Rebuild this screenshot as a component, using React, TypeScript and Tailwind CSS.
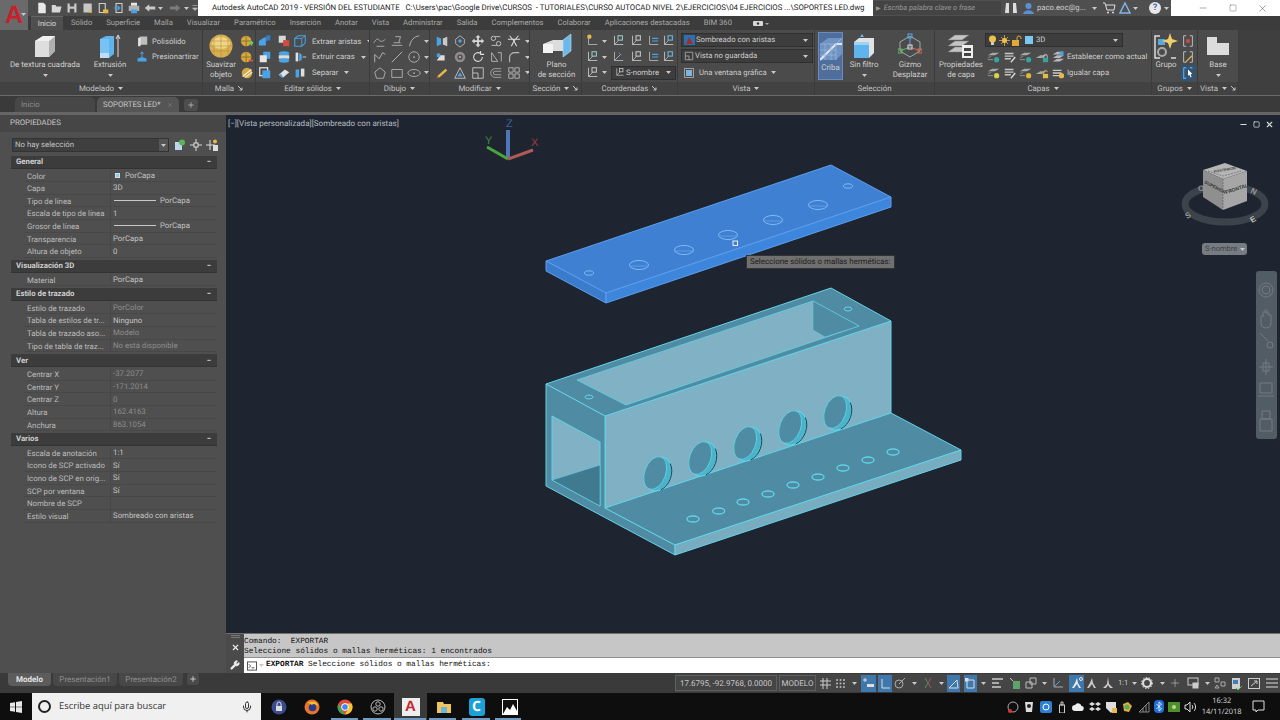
import React from "react";
import { Mic, Plus, Minus, X, Square, Wrench } from "lucide-react";

const G = "#b4b4b4";
const B = "#4aa3e6";
const Y = "#e6b94a";

const layer = (c: string) => (
  <>
    <path d="M1 6l5-3h8L9 6z" fill="#a8a8a8" />
    <path d="M1 9l4-2" stroke="#8a8a8a" />
    <circle cx="11" cy="11" r="3" fill={c} />
    <path d="M1 11h6" stroke="#9a9a9a" />
  </>
);
const ucs = (c: string) => (
  <>
    <path d="M4 2v10h10" stroke={G} strokeWidth="1.2" />
    <path d="M4 12l5-5" stroke={G} />
    <rect x="8" y="2" width="5" height="5" fill="none" stroke={c} strokeWidth="1.2" />
  </>
);
const P: Record<string, React.ReactNode> = {
  new: <path d="M3 1h7l3 3v11H3z" fill="#e8e8e8" />,
  open: <path d="M1 4h5l1 2h7l-2 8H1z" fill="#d7d7d7" />,
  save: <path d="M2 2h12v12H2z M5 2v4h6V2z M5 9v5h6V9z" fill="#c8c8c8" fillRule="evenodd" />,
  saveas: <><path d="M2 2h11v12H2z" fill="#c8c8c8" /><path d="M9 9l5 5H9z" fill={Y} /></>,
  cloud: <><path d="M3 2h8v12H3z" fill="none" stroke="#cfcfcf" strokeWidth="1.5" /><path d="M8 10h7v5H8z" fill={Y} /></>,
  export: <><path d="M4 2h8v12H4z" fill="none" stroke="#cfcfcf" strokeWidth="1.4" /><path d="M1 8h8M6 5l3 3-3 3" stroke={B} strokeWidth="1.6" /></>,
  print: <><path d="M4 1h8v4H4z" fill="#e8e8e8" /><path d="M1 5h14v7H1z" fill="#b0b0b0" /><path d="M4 10h8v5H4z" fill={B} /></>,
  undo: <path d="M7 3L1 8l6 5v-3h8V6H7z" fill="#c8c8c8" />,
  redo: <path d="M9 3l6 5-6 5v-3H1V6h8z" fill="#7b7b7b" />,
  menu: <path d="M4 4h8M4 8l4 4 4-4z" stroke="#bbb" fill="#bbb" />,
  cubes: <><path d="M1 8l6-4h7l-5 4v5H1z" fill={B} /><path d="M9 8V2l5-1v6z" fill="#2e7fc6" /></>,
  sq2: <><rect x="2" y="2" width="8" height="8" fill="#d8d8d8" /><rect x="7" y="7" width="7" height="7" fill="#d24b3e" /></>,
  box3: <><path d="M2 5l4-3h8v8l-4 4H2z" fill="none" stroke={B} strokeWidth="1.2" /><path d="M2 5h8v9M10 5l4-3" stroke={B} /></>,
  cw: <><rect x="6" y="2" width="8" height="8" fill={B} /><rect x="2" y="6" width="8" height="8" fill="#e6e6e6" /></>,
  cyl: <><ellipse cx="8" cy="4" rx="6" ry="2.5" fill={B} /><path d="M2 6h12v4H2z" fill="#dcdcdc" /><ellipse cx="8" cy="12" rx="6" ry="2.5" fill={B} /></>,
  ex: <><path d="M3 3h3v10H3z" fill="#e0e0e0" /><path d="M7 3l3 2v6l-3 2z" fill={B} /><path d="M11 8h4" stroke="#ddd" /></>,
  cw2: <><rect x="2" y="2" width="9" height="9" fill="none" stroke="#ddd" strokeWidth="1.5" /><rect x="5" y="5" width="9" height="9" fill={B} /></>,
  era: <><path d="M2 10l7-6 5 3-7 6z" fill="#e2e2e2" /><path d="M2 10l3 3h2l-2-4z" fill={B} /></>,
  sep: <><path d="M3 4h4v9H3z" fill={B} /><path d="M9 3h4v9H9z" fill="#dedede" /></>,
  pols: <><path d="M3 4l3-2h9v11H6l-3 2z" fill="#bdbdbd" /><path d="M3 4h3v11H3z" fill="#e5e5e5" /></>,
  press: <><path d="M2 10l6-2 6 2v4H2z" fill={B} /><path d="M8 8V2M6 4l2-3 2 3" stroke={B} strokeWidth="1.3" fill="none" /></>,
  gp: <><circle cx="7" cy="8" r="6" fill="#d6a83e" /><path d="M1 8h12M7 2v12" stroke="#8a6f25" /><path d="M11 10h4M13 8v5" stroke="#5fd45f" strokeWidth="2" /></>,
  gm: <><circle cx="7" cy="8" r="6" fill="#d6a83e" /><path d="M1 8h12M7 2v12" stroke="#8a6f25" /><path d="M10 12h5" stroke="#e0533c" strokeWidth="2" /></>,
  gs: <><circle cx="8" cy="8" r="6" fill="#d6a83e" /><path d="M3 12L13 4M6 13L14 7" stroke="#eee" strokeWidth="1.4" /></>,
  poly: <path d="M1 10c3-5 5-5 6-3s4 2 7-1M4 14h9" stroke={G} />,
  line: <path d="M2 14L14 2" stroke={G} strokeWidth="1.1" />,
  arc: <path d="M3 14C4 7 8 3 14 2" stroke={G} strokeWidth="1.1" />,
  wave: <path d="M2 14V5l5 5 4-7 3 2" stroke={G} strokeWidth="1.1" />,
  circ: <><circle cx="8" cy="8" r="6" stroke={G} /><circle cx="8" cy="8" r="1" fill={G} /></>,
  pent: <path d="M8 2l6 5-2 7H4L2 7z" stroke={G} />,
  rect: <path d="M2 4h12v9H2z" stroke={G} />,
  ell: <><ellipse cx="8" cy="8" rx="7" ry="4" stroke={G} /><circle cx="8" cy="8" r="1" fill={G} /></>,
  hat: <path d="M2 13h12M4 10h8M6 3h6l-2 7" stroke={G} />,
  mirror: <><path d="M2 3l5 2v7l-5 2z" fill={B} /><path d="M9 5l5-2v11l-5-2z" fill="#c9c9c9" /></>,
  arr3: <><path d="M8 2l5 4v5l-5 4-5-4V6z" stroke="#bbb" /><circle cx="8" cy="8" r="2" fill={B} /></>,
  move: <path d="M8 1l3 3H9v3h3V5l3 3-3 3V9H9v3h2l-3 3-3-3h2V9H4v2L1 8l3-3v2h3V4H5z" fill="#d8d8d8" />,
  scis: <><circle cx="5" cy="5" r="2.5" stroke="#ccc" /><circle cx="11" cy="11" r="2.5" stroke="#ccc" /><path d="M7 3h6M3 13h6" stroke="#ccc" /></>,
  trim: <path d="M3 2l5 6 5-6M5 14l3-6 3 6M1 6h14" stroke="#ddd" strokeWidth="1.2" />,
  stretch: <><path d="M2 12h9V6H6z" fill="#ddd" /><path d="M2 4h4v4H2z" fill={B} /></>,
  gear: <><circle cx="8" cy="8" r="6" fill="#8c8c8c" /><circle cx="8" cy="8" r="3" fill="#4a4a4a" /><circle cx="8" cy="8" r="1.4" fill="#c79090" /></>,
  rot: <path d="M13 8a5 5 0 1 1-2-4M11 1v4h4" stroke="#ddd" strokeWidth="1.2" />,
  scale: <path d="M3 13V3l7 10zM10 3h4v10" stroke="#bbb" />,
  fillet: <path d="M3 14V8c0-3 3-5 6-5h5" stroke="#bbb" strokeWidth="1.2" />,
  pencil: <><path d="M2 14l3-1 9-8-2-2-9 8z" fill={Y} /><path d="M2 14l3-1-2-2z" fill="#d24b3e" /></>,
  tri: <><path d="M8 2l6 12H2z" stroke="#ccc" /><path d="M8 7l3 5H5z" fill={B} /></>,
  frame: <><path d="M2 2h12v12H2z" stroke="#ccc" /><path d="M2 8h6v6" stroke="#ccc" /></>,
  offs: <path d="M14 3H7a5 5 0 0 0 0 10h7M14 6H7a2 2 0 0 0 0 4h7" stroke="#aaa" />,
  arr: <path d="M2 2h5v5H2zM9 2h5v5H9zM2 9h5v5H2zM9 9h5v5H9z" stroke="#bbb" />,
  u1: <><path d="M4 2v10h10" stroke={G} /><circle cx="5" cy="3" r="2.5" fill={Y} /></>,
  u2: ucs("#9cc"),
  u3: ucs("#6bb6e5"),
  u4: ucs("#c8c8c8"),
  u5: <><path d="M4 2v10h10" stroke={G} /><path d="M7 5h7M7 8h7" stroke={B} strokeWidth="1.2" /></>,
  ray: <><path d="M4 2v10h10M4 12l7-7" stroke={G} /><path d="M9 3l3 3" stroke={B} /></>,
  view: <><path d="M2 2h12v12H2z" stroke="#bbb" /><rect x="4" y="4" width="8" height="8" fill="#7db5e2" /></>,
  lay: layer("#35a6a0"),
  lay2: layer("#d9d24f"),
  lay3: layer("#e0b53e"),
  lay4: layer("#9a9a9a"),
  lock: <><path d="M1 9l5-3h7L8 9z" fill="#a8a8a8" /><rect x="9" y="9" width="6" height="5" fill="#3aa3a0" /><path d="M10 9V7a2 2 0 0 1 4 0v2" stroke="#ccc" /></>,
  lockY: <><path d="M1 9l5-3h7L8 9z" fill="#a8a8a8" /><rect x="9" y="9" width="6" height="5" fill={Y} /><path d="M10 9V7a2 2 0 0 1 4 0" stroke={Y} /></>,
  edit: <><path d="M2 4h10M2 7h10M2 10h7" stroke="#c8c8c8" strokeWidth="1.5" /><path d="M9 14l5-6" stroke="#ddd" strokeWidth="1.5" /></>,
  set: <><path d="M2 5l5-3h8l-5 3zM2 9l5-3h8l-5 3zM2 13l5-3h8l-5 3z" fill="#b9b9b9" /><circle cx="12" cy="4" r="2.5" fill={B} /></>,
  match: <><path d="M2 5h10M2 8h10M2 11h8" stroke="#c8c8c8" strokeWidth="1.6" /><circle cx="12" cy="11" r="3" fill={Y} /></>,
  grpA: <><path d="M3 2h3M3 2v12h3M13 2h-3M13 2v12h-3" stroke="#ccc" /><path d="M6 6h4v4H6z" fill="#d24b3e" /></>,
  grpB: <><path d="M3 2h3M3 2v12h3M13 2h-3M13 2v12h-3" stroke="#ccc" /><path d="M5 13l7-7 1 1-7 7z" fill={Y} /></>,
  grpC: <><path d="M3 2h3M3 2v12h3M13 2h-3" stroke={B} strokeWidth="1.5" /><path d="M8 4l5 5-2 .5 1 3-1 .5-1.5-3L8 11z" fill="#fff" /></>,
};
const Ico = ({ k, s = 14, className = "" }: { k: string; s?: number; className?: string }) => (
  <svg width={s} height={s} viewBox="0 0 16 16" fill="none" className={"shrink-0 " + className}>{P[k]}</svg>
);
const Dn = ({ className = "" }: { className?: string }) => (
  <svg width="5" height="3" viewBox="0 0 5 3" className={"shrink-0 " + className}><path d="M0 0h5L2.5 3z" fill="#c8c8c8" /></svg>
);
const Launch = () => (
  <svg width="5" height="5" viewBox="0 0 5 5" className="shrink-0"><path d="M0 0l4 4M4 1.5V4H1.5" stroke="#c8c8c8" fill="none" /></svg>
);

const Panel = ({ className, label, arrow = true, launch = false, children }: { className: string; label: string; arrow?: boolean; launch?: boolean; children: React.ReactNode }) => (
  <div className={"flex flex-col shrink-0 border-r border-[#3b3b3b] " + className}>
    <div className="h-[52px] flex bg-[#4b4b4b] overflow-hidden">{children}</div>
    <div className="h-[13px] bg-[#424242] flex items-center justify-center gap-[4px] text-[7.9px] text-[#c4c4c4]">
      <span>{label}</span>
      {arrow && <Dn />}
      {launch && <Launch />}
    </div>
  </div>
);
const Big = ({ className, icon, l1, l2, dn = false }: { className: string; icon: React.ReactNode; l1: string; l2?: string; dn?: boolean }) => (
  <div className={"flex flex-col items-center shrink-0 text-[7.85px] leading-[10.5px] text-[#cfcfcf] " + className}>
    <div className="h-[27px] mt-[2.5px] flex items-center justify-center">{icon}</div>
    <span className="whitespace-nowrap">{l1}</span>
    {l2 && <span className="whitespace-nowrap">{l2}</span>}
    {dn && <Dn className="mt-[4px]" />}
  </div>
);
const SRow = ({ className = "", children }: { className?: string; children: React.ReactNode }) => (
  <div className={"h-[15.7px] flex items-center text-[7.7px] text-[#cfcfcf] whitespace-nowrap " + className}>{children}</div>
);
const Col = ({ className = "", children }: { className?: string; children: React.ReactNode }) => (
  <div className={"flex flex-col pt-[3.5px] " + className}>{children}</div>
);

const Tabs = ["Sólido", "Superficie", "Malla", "Visualizar", "Paramétrico", "Inserción", "Anotar", "Vista", "Administrar", "Salida", "Complementos", "Colaborar", "Aplicaciones destacadas", "BIM 360"];

const Quick = () => (
  <div className="w-[170px] h-[16px] bg-[#4d4d4d] flex items-center pl-[6px]">
    {["new", "open", "save", "saveas", "cloud", "export", "print"].map((k) => (
      <Ico key={k} k={k} s={12} className="mx-[1.7px]" />
    ))}
    <Ico k="undo" s={12} className="ml-[2px]" /><Dn className="mx-[2px]" />
    <Ico k="redo" s={12} className="ml-[4px]" /><Dn className="ml-[3px] mr-[1px]" />
    <Ico k="menu" s={10} />
  </div>
);

const TitleBar = () => (
  <div className="h-[16px] flex items-stretch bg-white">
    <Quick />
    <div className="w-[675px] pl-[14px] text-[7.84px] leading-[16px] text-[#222] whitespace-pre overflow-hidden">
      {"Autodesk AutoCAD 2019 - VERSIÓN DEL ESTUDIANTE   C:\\Users\\pac\\Google Drive\\CURSOS  - TUTORIALES\\CURSO AUTOCAD NIVEL 2\\EJERCICIOS\\04 EJERCICIOS ...\\SOPORTES LED.dwg"}
    </div>
    <div className="w-[298px] bg-[#4f4f4f] flex items-center text-[7.7px] text-[#d0d0d0]">
      <div className="w-[128px] h-[14px] bg-[#444] flex items-center pl-[3px] gap-[3px] italic text-[7.4px] text-[#9a9a9a]">
        <span className="text-[6px] not-italic">▶</span><span>Escriba palabra clave o frase</span>
      </div>
      <svg width="14" height="12" viewBox="0 0 14 12" className="ml-[3px]"><path d="M2 1h3v10H1zM9 1h3l1 10H9z" fill="#ddd" /></svg>
      <svg width="13" height="13" viewBox="0 0 13 13" className="ml-[4px]"><circle cx="6.5" cy="4" r="3" fill="#5b8fd6" /><path d="M1 12c1-5 10-5 11 0z" fill="#5b8fd6" /></svg>
      <span className="ml-[2px] w-[50px]">paco.eoc@g...</span>
      <Dn className="ml-[5px]" />
      <svg width="14" height="12" viewBox="0 0 14 12" className="ml-[5px]"><path d="M1 1h2l2 7h7l1-5H4" stroke="#ddd" fill="none" /><circle cx="6" cy="10.5" r="1" fill="#ddd" /><circle cx="11" cy="10.5" r="1" fill="#ddd" /></svg>
      <svg width="12" height="12" viewBox="0 0 12 12" className="ml-[3px]"><path d="M6 1l5 10H1z" stroke="#7fb2e5" fill="none" strokeWidth="1.5" /></svg>
      <Dn className="ml-[2px]" />
      <div className="ml-[11px] w-[12px] h-[12px] rounded-full bg-[#e8e8e8] text-[#3a6db5] text-[9px] font-bold leading-[12px] text-center">?</div>
      <Dn className="ml-[3px]" />
    </div>
    <div className="flex-1 flex items-center text-[#333]">
      <Minus size={10} strokeWidth={1} className="ml-[27px]" />
      <Square size={8} strokeWidth={1} className="ml-[21px]" />
      <X size={11} strokeWidth={1} className="ml-[20px]" />
    </div>
  </div>
);

const RibbonTabs = () => (
  <div className="h-[14px] bg-[#3c3c3c] flex items-center text-[7.65px] text-[#a8a8a8] pl-[31px]">
    <div className="w-[32px] h-[14px] bg-[#4f4f4f] border-t border-[#666] text-[#dcdcdc] text-center leading-[13px]">Inicio</div>
    <div className="flex gap-[14px] ml-[8px]">
      {Tabs.map((t) => <span key={t} className="whitespace-nowrap">{t}</span>)}
    </div>
    <svg width="16" height="7" viewBox="0 0 16 7" className="ml-[21px]"><rect x="0" y="1" width="10" height="5" rx="1" fill="#d8d8d8" /><circle cx="5" cy="3.5" r="1.2" fill="#333" /><path d="M12 3h4l-2 2z" fill="#aaa" /></svg>
  </div>
);

const CubeBig = () => (
  <svg width="24" height="24" viewBox="0 0 24 24"><path d="M2 7l8-5h12v15l-6 6H2z" fill="#dedede" /><path d="M16 7l6-5v15l-6 6z" fill="#b0b0b0" /><path d="M2 7l8-5h12l-6 5z" fill="#f0f0f0" /></svg>
);
const Extr = () => (
  <svg width="22" height="26" viewBox="0 0 22 26"><path d="M1 6l6-3h8v18l-5 4H1z" fill="#5fb4ee" /><path d="M1 6h9v19H1z" fill="#78c3f3" /><path d="M1 20h9v5H1z" fill="#bcdff5" /><path d="M19 24V3M17 6l2-4 2 4" stroke="#ddd" fill="none" /></svg>
);
const Sphere = () => (
  <svg width="24" height="24" viewBox="0 0 24 24"><circle cx="12" cy="12" r="11.5" fill="#d8b04f" /><ellipse cx="12" cy="9" rx="9" ry="6" fill="#efd585" /><path d="M1 12h22M12 1v22M5 3v18M19 3v18M2 7h20M2 17h20" stroke="#a88a38" strokeWidth=".5" /></svg>
);
const Plano = () => (
  <svg width="32" height="26" viewBox="0 0 32 26"><path d="M2 11l10-4h10v11H2z" fill="#dcdcdc" /><path d="M2 11h10v9H2z" fill="#f2f2f2" /><path d="M22 7l8-6v17l-8 6z" fill="#6db8ea" stroke="#bfe2f8" strokeWidth=".6" /></svg>
);
const CribaI = () => (
  <svg width="22" height="24" viewBox="0 0 22 24"><path d="M0 7l8-6h14v16l-6 6H0z" fill="#6f94c4" /><path d="M0 23L16 7h6" stroke="#dfe7f2" strokeWidth="2" fill="none" /><path d="M16 7v16M0 7h16M22 1l-6 6M5 7v16M11 7v16M0 13h16M0 18h16" stroke="#9db7d9" strokeWidth=".7" /></svg>
);
const SinF = () => (
  <svg width="24" height="26" viewBox="0 0 24 26"><path d="M10 1l2 3H8z" fill="#6db8ea" /><path d="M2 9l5-4h15v15l-5 5H2z" fill="#e2e2e2" /><path d="M2 9h15v16H2z" fill="#5fb4ee" /><path d="M2 9h15v3H2z" fill="#9ed3f5" /></svg>
);
const Gizmo = () => (
  <svg width="24" height="26" viewBox="0 0 24 26" fill="none"><path d="M12 3l10 6v9l-10 6-10-6V9z" stroke="#9aa" /><path d="M12 3v11" stroke="#5fa8e6" /><path d="M12 14L2 18" stroke="#68b868" /><path d="M12 14l10 4" stroke="#d36a5c" /><rect x="10" y="1" width="4" height="4" stroke="#5fa8e6" /><rect x="0" y="16" width="4" height="4" stroke="#68b868" /><rect x="20" y="16" width="4" height="4" stroke="#d36a5c" /><rect x="10" y="12" width="4" height="4" stroke="#ddd" /></svg>
);
const Props = () => (
  <svg width="28" height="26" viewBox="0 0 28 26"><path d="M1 7l7-5h14l-7 5zM1 13l7-5h14l-7 5zM1 19l7-5h14l-7 5z" fill="#c4c4c4" stroke="#777" strokeWidth=".5" /><rect x="15" y="12" width="11" height="13" fill="#eee" /><path d="M17 15h7v3h-7zM17 20h7v3h-7z" fill="#444" /></svg>
);
const GrupoI = () => (
  <svg width="24" height="28" viewBox="0 0 24 28" fill="none"><path d="M6 4H1v22h5M22 26h-5" stroke="#ddd" strokeWidth="1.5" /><rect x="4" y="7" width="7" height="6" fill="#5aa7dd" /><circle cx="8" cy="20" r="4" stroke="#aaa" strokeWidth="2" /><path d="M16 1l2 6 6 2-6 2-2 6-2-6-6-2 6-2z" fill="#f1cf68" /></svg>
);
const Base = () => (
  <svg width="22" height="18" viewBox="0 0 22 18"><path d="M0 0h10v6h12v12H0z" fill="#dcdcdc" /></svg>
);

const Combo = ({ className, children }: { className: string; children: React.ReactNode }) => (
  <div className={"h-[14px] bg-[#3d3d3d] border border-[#2f2f2f] flex items-center text-[7.7px] text-[#cfcfcf] pl-[2px] pr-[4px] whitespace-nowrap " + className}>
    {children}
    <Dn className="ml-auto" />
  </div>
);

const Ribbon = () => (
  <div className="h-[65px] flex bg-[#3f3f3f] border-b border-[#6a6a6a] box-content">
    <Panel className="w-[203px]" label="Modelado">
      <Big className="w-[78px] ml-[6px]" icon={<CubeBig />} l1="De textura cuadrada" dn />
      <Big className="w-[40px] ml-[6px]" icon={<Extr />} l1="Extrusión" dn />
      <Col className="ml-[6px]">
        <SRow className="gap-[4px]"><Ico k="pols" s={12} />Polisólido</SRow>
        <SRow className="gap-[4px]"><Ico k="press" s={12} />Presionartirar</SRow>
      </Col>
    </Panel>
    <Panel className="w-[53px]" label="Malla" arrow={false} launch>
      <Big className="w-[32px] ml-[2px]" icon={<Sphere />} l1="Suavizar" l2="objeto" />
      <Col className="ml-[3px]"><SRow><Ico k="gp" /></SRow><SRow><Ico k="gm" /></SRow><SRow><Ico k="gs" /></SRow></Col>
    </Panel>
    <Panel className="w-[114px]" label="Editar sólidos">
      <Col className="ml-[2px]">
        <SRow className="gap-[5px]"><Ico k="cubes" /><Ico k="sq2" /><Ico k="box3" className="ml-[-3px]" /><span>Extraer aristas</span><Dn className="ml-[1px]" /></SRow>
        <SRow className="gap-[5px]"><Ico k="cw" /><Ico k="cyl" /><Ico k="ex" className="ml-[-3px]" /><span>Extruir caras</span><Dn className="ml-[1px]" /></SRow>
        <SRow className="gap-[5px]"><Ico k="cw2" /><Ico k="era" /><Ico k="sep" className="ml-[-3px]" /><span>Separar</span><Dn className="ml-[1px]" /></SRow>
      </Col>
    </Panel>
    <Panel className="w-[60px]" label="Dibujo">
      <Col className="ml-[3px]">
        <SRow className="gap-[3px]"><Ico k="poly" /><Ico k="hat" /><Ico k="arc" /><Dn /></SRow>
        <SRow className="gap-[3px]"><Ico k="wave" /><Ico k="line" /><Ico k="circ" /><Dn /></SRow>
        <SRow className="gap-[3px]"><Ico k="pent" /><Ico k="rect" /><Ico k="ell" /><Dn /></SRow>
      </Col>
    </Panel>
    <Panel className="w-[100px]" label="Modificar">
      <Col className="ml-[5px]">
        <SRow className="gap-[4px]"><Ico k="mirror" /><Ico k="arr3" /><Ico k="move" /><Ico k="scis" /><Ico k="trim" /><Dn /></SRow>
        <SRow className="gap-[4px]"><Ico k="stretch" /><Ico k="gear" /><Ico k="rot" /><Ico k="scale" /><Ico k="fillet" /><Dn /></SRow>
        <SRow className="gap-[4px]"><Ico k="pencil" /><Ico k="tri" /><Ico k="frame" /><Ico k="offs" /><Ico k="arr" /><Dn /></SRow>
      </Col>
    </Panel>
    <Panel className="w-[52px]" label="Sección" launch>
      <Big className="w-[51px] ml-[1px]" icon={<Plano />} l1="Plano" l2="de sección" />
    </Panel>
    <Panel className="w-[96px]" label="Coordenadas" arrow={false} launch>
      <Col className="ml-[3px]">
        <SRow><Ico k="u1" /><Dn className="ml-[3px] mr-[4px]" /><Ico k="u2" className="mr-[4px]" /><Ico k="u4" className="mr-[3px]" /><Ico k="u5" className="mr-[1px]" /><Ico k="u3" /></SRow>
        <SRow><Ico k="u2" /><Dn className="ml-[3px] mr-[4px]" /><Ico k="ray" className="mr-[4px]" /><Ico k="u4" className="mr-[3px]" /><Ico k="u5" className="mr-[1px]" /><Ico k="u3" /></SRow>
        <SRow><Ico k="u4" /><Dn className="ml-[3px] mr-[4px]" /><Combo className="w-[65px]"><Ico k="u4" s={11} /><span className="ml-[1px]">S-nombre</span></Combo></SRow>
      </Col>
    </Panel>
    <Panel className="w-[137px]" label="Vista">
      <div className="flex flex-col ml-[3px] w-[132px] pt-[3px]">
        <Combo className="w-[132px] mb-[2px]">
          <svg width="11" height="10" viewBox="0 0 11 10" className="mr-[1px]"><rect width="11" height="10" fill="#2e6fb0" /><path d="M2 9l3-7 4 7z" fill="#a02d2d" /></svg>Sombreado con aristas
        </Combo>
        <Combo className="w-[132px] mb-[2px]"><Ico k="frame" s={10} className="mr-[1px]" />Vista no guardada</Combo>
        <SRow className="ml-[2px] gap-[4px]"><Ico k="view" s={12} />Una ventana gráfica<Dn /></SRow>
      </div>
    </Panel>
    <Panel className="w-[120px]" label="Selección" arrow={false}>
      <div className="w-[25px] h-[48px] mt-[2px] ml-[3px] bg-[#4f6e9c] border border-[#6a8bbb] shrink-0">
        <Big className="w-full" icon={<CribaI />} l1="Criba" />
      </div>
      <Big className="w-[42px]" icon={<SinF />} l1="Sin filtro" dn />
      <Big className="w-[46px] ml-[2px]" icon={<Gizmo />} l1="Gizmo" l2="Desplazar" />
    </Panel>
    <Panel className="w-[217px]" label="Capas">
      <Big className="w-[46px] ml-[3px]" icon={<Props />} l1="Propiedades" l2="de capa" />
      <div className="flex flex-col ml-[1px] pt-[3px]">
        <Combo className="w-[138px] mb-[2px]">
          <svg width="9" height="11" viewBox="0 0 9 11"><circle cx="4.5" cy="4" r="3.5" fill="#efc04a" /><rect x="3" y="7" width="3" height="3" fill="#ccc" /></svg>
          <svg width="11" height="11" viewBox="0 0 11 11" className="ml-[2px]"><circle cx="5.5" cy="5.5" r="2.5" fill="#efc04a" /><path d="M5.5 0v11M0 5.5h11M2 2l7 7M9 2l-7 7" stroke="#efc04a" strokeWidth=".7" /></svg>
          <svg width="10" height="11" viewBox="0 0 10 11" className="ml-[2px]"><rect y="5" width="7" height="6" fill="#e2a93a" /><path d="M5 5V3a2 2 0 0 1 4 0v1" stroke="#e2a93a" fill="none" /></svg>
          <div className="w-[8px] h-[8px] bg-[#79c8f0] ml-[3px] mr-[3px]" />3D
        </Combo>
        <SRow className="gap-[2px] ml-[2px]"><Ico k="lay" /><Ico k="edit" /><Ico k="lay" /><Ico k="lock" /><Ico k="set" /><span>Establecer como actual</span></SRow>
        <SRow className="gap-[2px] ml-[2px]"><Ico k="lay2" /><Ico k="edit" /><Ico k="lay3" /><Ico k="lockY" /><Ico k="match" /><span>Igualar capa</span></SRow>
      </div>
    </Panel>
    <Panel className="w-[46px]" label="Grupos">
      <Big className="w-[28px]" icon={<GrupoI />} l1="Grupo" />
      <Col className="ml-[1px]"><SRow><Ico k="grpA" /></SRow><SRow><Ico k="grpB" /></SRow><SRow className="bg-[#35536f] w-[15px]"><Ico k="grpC" /></SRow></Col>
    </Panel>
    <Panel className="w-[41px]" label="Vista" launch>
      <Big className="w-[40px]" icon={<Base />} l1="Base" dn />
    </Panel>
  </div>
);

const FileTabs = () => (
  <div className="h-[16px] bg-[#3a3a3a] flex items-end text-[7.8px] pl-[15px]">
    <div className="w-[80px] h-[15px] bg-[#474747] rounded-t-[5px] text-[#8e8e8e] pl-[6px] leading-[16px]">Inicio</div>
    <div className="w-[82px] h-[15px] ml-[2px] bg-[#555] rounded-t-[5px] text-[#c8c8c8] pl-[6px] leading-[16px] flex items-center whitespace-nowrap">
      SOPORTES LED*<X size={6} className="ml-[6px] text-[#888]" />
    </div>
    <div className="w-[14px] h-[12px] ml-[5px] mb-[1px] bg-[#4d4d4d] rounded-[3px] flex items-center justify-center"><Plus size={8} className="text-[#ccc]" /></div>
  </div>
);

type R = { k: string; v?: string; dim?: boolean; ln?: boolean; sw?: boolean };
const Groups: { t: string; rows: R[] }[] = [
  { t: "General", rows: [
    { k: "Color", v: "PorCapa", sw: true }, { k: "Capa", v: "3D" }, { k: "Tipo de línea", v: "PorCapa", ln: true },
    { k: "Escala de tipo de línea", v: "1" }, { k: "Grosor de línea", v: "PorCapa", ln: true }, { k: "Transparencia", v: "PorCapa" }, { k: "Altura de objeto", v: "0" },
  ] },
  { t: "Visualización 3D", rows: [{ k: "Material", v: "PorCapa" }] },
  { t: "Estilo de trazado", rows: [
    { k: "Estilo de trazado", v: "PorColor", dim: true }, { k: "Tabla de estilos de tr...", v: "Ninguno" },
    { k: "Tabla de trazado aso...", v: "Modelo", dim: true }, { k: "Tipo de tabla de traz...", v: "No está disponible", dim: true },
  ] },
  { t: "Ver", rows: [
    { k: "Centrar X", v: "-37.2077", dim: true }, { k: "Centrar Y", v: "-171.2014", dim: true }, { k: "Centrar Z", v: "0", dim: true },
    { k: "Altura", v: "162.4163", dim: true }, { k: "Anchura", v: "863.1054", dim: true },
  ] },
  { t: "Varios", rows: [
    { k: "Escala de anotación", v: "1:1" }, { k: "Icono de SCP activado", v: "Sí" }, { k: "Icono de SCP en orig...", v: "Sí" },
    { k: "SCP por ventana", v: "Sí" }, { k: "Nombre de SCP" }, { k: "Estilo visual", v: "Sombreado con aristas" },
  ] },
];

const PropsPanel = () => (
  <div className="w-[226px] shrink-0 bg-[#4f4f4f] flex flex-col text-[7.8px] text-[#bdbdbd]">
    <div className="h-[17px] bg-[#464646] pl-[10px] leading-[16px] text-[#c8c8c8]">PROPIEDADES</div>
    <div className="h-[24px] flex items-center pl-[12px] pt-[2px]">
      <div className="w-[157px] h-[14px] bg-[#3f3f3f] border border-[#333] flex items-center pl-[2px] text-[#c4c4c4]">No hay selección<div className="ml-auto w-[9px] h-full bg-[#555] flex items-center justify-center"><Dn /></div></div>
      <svg width="12" height="12" viewBox="0 0 12 12" className="ml-[5px]"><rect x="1" y="3" width="7" height="8" fill="#bfd6ea" /><circle cx="8" cy="3.5" r="3" fill="#58b558" /></svg>
      <svg width="12" height="12" viewBox="0 0 12 12" className="ml-[4px]"><path d="M6 0v12M0 6h12" stroke="#ddd" /><rect x="4" y="4" width="4" height="4" fill="#4f4f4f" stroke="#ddd" /></svg>
      <svg width="12" height="12" viewBox="0 0 12 12" className="ml-[4px]"><path d="M4 1v10M0 6h9" stroke="#ddd" /><rect x="7" y="6" width="5" height="6" fill="#ddd" /><circle cx="9" cy="2.5" r="2" fill={Y} /></svg>
    </div>
    <div className="flex flex-col pl-[11px] w-[217px]">
      {Groups.map((g) => (
        <div key={g.t} className="mb-[2px]">
          <div className="h-[13px] bg-[#3c3c3c] flex items-center pl-[5px] font-bold text-[#cfcfcf] border-b border-[#333] mb-[0.5px]">
            {g.t}<span className="ml-auto mr-[6px] text-[#ddd]">−</span>
          </div>
          {g.rows.map((r) => (
            <div key={r.k} className="h-[12.66px] flex border-b border-[#484848] ml-[13px] whitespace-nowrap">
              <div className="w-[87px] pl-[3px] border-r border-[#484848] leading-[13px] overflow-hidden">{r.k}</div>
              <div className={"pl-[2px] flex items-center leading-[13px] " + (r.dim ? "text-[#8e8e8e]" : "text-[#c4c4c4]")}>
                {r.sw && <div className="w-[5px] h-[5px] bg-[#85cdf0] border border-[#ddd] ml-[2px] mr-[5px]" />}
                {r.ln && <div className="w-[42px] h-[1px] bg-[#c8c8c8] mr-[4px] ml-[1px]" />}
                {r.v}
              </div>
            </div>
          ))}
        </div>
      ))}
    </div>
  </div>
);

const bigHoles: [number, number][] = [[658, 475], [703, 460], [748, 445], [793, 429], [838, 414]];
const smallHoles: [number, number][] = [[693, 520], [718.7, 512], [743, 503], [768, 495], [793, 486], [818, 478], [843, 469], [868, 461], [893, 453]];
const plateHoles: [number, number, number][] = [[589, 274, 4.5], [639, 266, 9.5], [684, 251, 9.5], [728, 236, 9.5], [773, 221, 9.5], [818, 206, 9.5], [848, 187, 4.5]];
const edge = "#62d3e6";

const Drawing = () => (
  <svg width="1054" height="516" viewBox="226 116 1054 516" className="block" fill="none">
    <g stroke="#5a9ff0" strokeWidth="1">
      <path d="M546 262L831 166L891 198L606 294Z" fill="#3f80d2" />
      <path d="M546 262V272L606 304V294Z" fill="#3a7bcc" />
      <path d="M606 294L891 198V208L606 304Z" fill="#3d86dc" />
    </g>
    {plateHoles.map(([x, y, r]) => (
      <g key={x} stroke="#7fbaf5" strokeWidth="1">
        <ellipse cx={x} cy={y} rx={r} ry={r / 2.1} />
        {r > 5 && <path d={`M${x - r + 1} ${y + 1}h${2 * r - 2}`} strokeWidth=".5" />}
      </g>
    ))}
    <g stroke={edge} strokeWidth="1">
      <path d="M605 417L891 322V414L605 509Z" fill="#7fb0c3" />
      <path d="M546 385L831 289L891 322L605 417Z" fill="#4f8ca3" />
      <path d="M577 381L813 302L859 327L626 406Z" fill="#80b1c4" strokeWidth=".8" />
      <path d="M813 302L859 327L825 338L813 331Z" fill="#4f8ca3" strokeWidth=".5" />
      <path d="M546 385L605 417V509L675 546V556L546 487Z" fill="#4f8ca3" />
      <path d="M605 509L891 414L961 451L675 546Z" fill="#4f8ca3" />
      <path d="M675 546L961 451V461L675 556Z" fill="#78adc1" />
      <path d="M552 417L600 443V507L552 481Z" fill="#80b1c4" />
      <path d="M552 481L600 466V507Z" fill="#3f7a90" strokeWidth=".6" />
    </g>
    <ellipse cx="848" cy="310" rx="4" ry="2" stroke={edge} />
    <ellipse cx="589" cy="398" rx="4" ry="2" stroke={edge} />
    {bigHoles.map(([x, y]) => (
      <g key={x} transform={`rotate(20 ${x} ${y})`}>
        <ellipse cx={x} cy={y} rx="13" ry="17.5" fill="#49b4cc" stroke={edge} />
        <path d={`M${x + 8} ${y - 14}A13 17.5 0 0 1 ${x + 8} ${y + 14}`} stroke="#11333f" strokeWidth=".8" />
        <ellipse cx={x - 3} cy={y} rx="10.5" ry="17" fill="#4f8ca3" stroke={edge} strokeWidth=".8" />
      </g>
    ))}
    {smallHoles.map(([x, y]) => (
      <ellipse key={x} cx={x} cy={y} rx="6" ry="3" stroke={edge} strokeWidth="1.3" fill="#4f8ca3" />
    ))}
    <path d="M508 160V131" stroke="#4f77b5" strokeWidth="4" />
    <path d="M508 160L487 148" stroke="#4aa53c" strokeWidth="3" />
    <path d="M508 160L533 151" stroke="#b05a55" strokeWidth="3" />
    <text x="506" y="128" fontSize="11" fill="#3f5f9c" fontFamily="Liberation Sans">Z</text>
    <text x="531" y="147" fontSize="11" fill="#9c3f3f" fontFamily="Liberation Sans">X</text>
    <text x="485" y="145" fontSize="11" fill="#3f8c3f" fontFamily="Liberation Sans">Y</text>
    <rect x="733" y="242" width="4.5" height="4.5" stroke="#eee" />
    <ellipse cx="1225" cy="205" rx="40" ry="18" stroke="#3c434a" strokeWidth="7" />
    <path d="M1203 171L1225 164L1247 172L1223 180Z" fill="#b5b5b5" />
    <path d="M1203 171L1223 180L1223 211L1203 198Z" fill="#8f8f8f" />
    <path d="M1223 180L1247 172V202L1223 211Z" fill="#a6a6a6" />
    <path d="M1208 172L1223 177L1241 172M1223 180V211" stroke="#444" strokeWidth=".5" strokeDasharray="2 1" />
    <text fontSize="5" fill="#333" fontFamily="Liberation Sans" transform="translate(1226 195) rotate(-18)" fontWeight="700">FRONTAL</text>
    <text fontSize="4.5" fill="#333" fontFamily="Liberation Sans" transform="translate(1204 184) rotate(28)" fontWeight="700">SUPERIOR</text>
    <text fontSize="3.8" fill="#444" fontFamily="Liberation Sans" transform="translate(1214 174) rotate(-10)" fontWeight="700">POSTERIOR</text>
    <text x="1185" y="219" fontSize="8" fontWeight="700" fill="#999" fontFamily="Liberation Sans" transform="rotate(-30 1188 216)">S</text>
    <text x="1250" y="223" fontSize="8" fontWeight="700" fill="#bbb" fontFamily="Liberation Sans" transform="rotate(-30 1253 220)">E</text>
    <text x="1251" y="195" fontSize="8" fontWeight="700" fill="#999" fontFamily="Liberation Sans" transform="rotate(25 1254 192)">N</text>
    <text x="1198" y="192" fontSize="8" fontWeight="700" fill="#999" fontFamily="Liberation Sans">O</text>
  </svg>
);

const NavIcons = () => (
  <svg width="21" height="168" viewBox="0 0 21 168" fill="none" stroke="#737b82" strokeWidth="1">
    <circle cx="10" cy="19" r="7" /><circle cx="10" cy="19" r="4" />
    <path d="M5 52v-6c0-2 2-2 2 0v-4c0-2 2-2 2 0v-2c0-2 2-2 2 0v3c0-2 2-2 2 0v2c0-2 2-2 2 0v7c0 3-2 5-5 5s-5-2-5-5z" />
    <path d="M4 62l8 8" /><circle cx="14" cy="74" r="3" />
    <path d="M10 88v16M3 96h14M7 92h6v8H7z" />
    <path d="M4 112h12v10H4zM2 125h16" />
    <path d="M6 140h8v8H6zM4 148h12v12H4z" />
  </svg>
);

const Canvas = () => (
  <div className="flex-1 relative bg-[#1f2530] overflow-hidden">
    <Drawing />
    <div className="absolute left-[2px] top-[3px] text-[8.05px] text-[#b5bac0] whitespace-nowrap">[−][Vista personalizada][Sombreado con aristas]</div>
    <div className="absolute left-[520px] top-[140px] w-[149px] h-[14px] bg-[#707070] border border-[#333] text-[7.9px] leading-[12px] pl-[3px] text-[#1c1c1c] whitespace-nowrap">Seleccione sólidos o mallas herméticas:</div>
    <div className="absolute left-[1013px] top-[5px] flex items-center gap-[5px] text-[#ddd]">
      <Minus size={9} strokeWidth={3} />
      <Square size={7} strokeWidth={2.5} />
      <X size={9} strokeWidth={3} />
    </div>
    <div className="absolute left-[976px] top-[128px] w-[45px] h-[12px] bg-[#777c82] rounded-[3px] text-[7.5px] leading-[12px] pl-[3px] text-[#3f4347] flex items-center whitespace-nowrap">S-nombre<Dn className="ml-[3px]" /></div>
    <div className="absolute left-[1030px] top-[156px] w-[21px] h-[168px] bg-[#525c65] rounded-[3px]"><NavIcons /></div>
  </div>
);

const CmdLine = () => (
  <div className="h-[42px] bg-[#1f2530] flex flex-col justify-end ml-[226px] absolute left-0 right-0 bottom-0 font-['Liberation_Mono',monospace] text-[7.8px] text-[#111]">
    <div className="flex h-[40px] border-t border-[#6f6f6f]">
      <div className="w-[18px] bg-[#4a4a4a] flex flex-col items-center text-[#eee] shrink-0">
        <div className="w-[9px] h-[3px] mt-[1px] border-y border-[#777]" />
        <X size={9} strokeWidth={3} className="mt-[5px]" />
        <Wrench size={10} fill="#eee" className="mt-[8px]" />
      </div>
      <div className="flex-1 flex flex-col">
        <div className="h-[24px] bg-[#c6c6c6] border-b border-[#8f8f8f] pt-[3px] leading-[10px] whitespace-pre">
          <div>{"Comando:  EXPORTAR"}</div>
          <div>Seleccione sólidos o mallas herméticas: 1 encontrados</div>
        </div>
        <div className="h-[16px] bg-white flex items-center pl-[3px] whitespace-pre">
          <svg width="10" height="10" viewBox="0 0 11 10" fill="none"><rect x=".5" y=".5" width="10" height="9" stroke="#444" /><path d="M2 3l2 2-2 2M5 7h3" stroke="#444" /></svg>
          <Dn className="mx-[2px]" />
          <b>EXPORTAR</b>{" Seleccione sólidos o mallas herméticas:"}
        </div>
      </div>
    </div>
  </div>
);

const StCell = ({ className = "", on = false, children }: { className: string; on?: boolean; children?: React.ReactNode }) => (
  <div className={"h-[17px] flex items-center justify-center shrink-0 " + (on ? "bg-[#3f78ad] " : "") + className}>{children}</div>
);
const StatusBar = () => (
  <div className="h-[20px] bg-[#3a3a3a] flex items-center text-[8px] text-[#c8c8c8]">
    <div className="flex items-start h-[20px] pl-[8px] w-[675px] shrink-0">
      <div className="w-[43px] h-[13px] bg-[#5c5c5c] rounded-b-[4px] text-center leading-[14px] font-bold text-[#e2e2e2]">Modelo</div>
      <div className="w-[64px] h-[13px] ml-[2px] bg-[#484848] rounded-b-[4px] text-center leading-[14px] text-[#8f8f8f]">Presentación1</div>
      <div className="w-[64px] h-[13px] ml-[2px] bg-[#484848] rounded-b-[4px] text-center leading-[14px] text-[#8f8f8f]">Presentación2</div>
      <div className="w-[12px] h-[12px] ml-[4px] bg-[#4a4a4a] rounded-[3px] flex items-center justify-center"><Plus size={8} strokeWidth={3} /></div>
    </div>
    <div className="flex items-center h-[18px] flex-1 bg-[#454545] overflow-hidden">
      <div className="w-[102px] h-[16px] border border-[#5f5f5f] text-center leading-[15px] shrink-0 whitespace-nowrap">17.6795, -92.9768, 0.0000</div>
      <div className="w-[37px] h-[16px] ml-[2px] border border-[#5f5f5f] text-center leading-[15px] shrink-0">MODELO</div>
      <StCell className="w-[16px] ml-[1px]"><svg width="11" height="11" viewBox="0 0 11 11" stroke="#ccc"><path d="M3 0v11M7 0v11M0 3h11M0 7h11" /></svg></StCell>
      <StCell className="w-[15px]"><svg width="11" height="11" viewBox="0 0 11 11" fill="#bbb"><circle cx="2" cy="2" r="1" /><circle cx="5.5" cy="2" r="1" /><circle cx="9" cy="2" r="1" /><circle cx="2" cy="5.5" r="1" /><circle cx="5.5" cy="5.5" r="1" /><circle cx="9" cy="5.5" r="1" /><circle cx="2" cy="9" r="1" /><circle cx="5.5" cy="9" r="1" /><circle cx="9" cy="9" r="1" /></svg></StCell>
      <StCell className="w-[13px]"><Dn /></StCell>
      <StCell on className="w-[15px]"><svg width="11" height="11" viewBox="0 0 11 11"><path d="M0 2h4M2 0v4" stroke="#ddd" /><rect x="4" y="6" width="7" height="3" fill="#ddd" /></svg></StCell>
      <StCell on className="w-[14px] ml-[2px]"><svg width="11" height="11" viewBox="0 0 11 11" fill="none" stroke="#ddd"><path d="M2 1v9h8" /></svg></StCell>
      <StCell className="w-[16px]"><svg width="12" height="12" viewBox="0 0 12 12" fill="none" stroke="#aaa"><circle cx="5" cy="7" r="4" /><path d="M5 7l6-6" /></svg></StCell>
      <StCell className="w-[12px]"><Dn /></StCell>
      <StCell className="w-[16px]"><svg width="10" height="12" viewBox="0 0 10 12" fill="none"><path d="M2 1l3 5-3 5" stroke="#5b8f5b" /><path d="M8 1L5 6l3 5" stroke="#9c5a50" /></svg></StCell>
      <StCell className="w-[10px]"><Dn /></StCell>
      <StCell on className="w-[13px] ml-[1px]"><svg width="11" height="11" viewBox="0 0 11 11" fill="none" stroke="#ddd"><path d="M1 10h9L9 2z" /></svg></StCell>
      <StCell on className="w-[13px] ml-[4px]"><svg width="11" height="11" viewBox="0 0 11 11" fill="none" stroke="#ddd"><path d="M2 2h7v8H2z" /><rect x="0" y="0" width="3" height="3" fill="#ddd" /></svg></StCell>
      <StCell className="w-[12px]"><Dn /></StCell>
      <StCell className="w-[16px]"><svg width="11" height="10" viewBox="0 0 11 10" stroke="#ccc" strokeWidth="1.5"><path d="M0 1h11M0 5h7M0 9h9" /></svg></StCell>
      <StCell className="w-[17px] ml-[1px]"><svg width="12" height="12" viewBox="0 0 12 12" fill="none"><rect x="4" y="4" width="7" height="8" fill="#5da36a" /><path d="M1 1l3 3" stroke="#ccc" /></svg></StCell>
      <StCell className="w-[16px]"><svg width="12" height="12" viewBox="0 0 12 12" fill="none" stroke="#bbb"><path d="M5 1h6v6H5zM1 5h6v6H1z" /></svg></StCell>
      <StCell className="w-[11px]"><Dn /></StCell>
      <StCell className="w-[16px]"><svg width="12" height="12" viewBox="0 0 12 12" fill="none"><path d="M2 1v9h9" stroke="#aaa" /><path d="M2 10l6-6" stroke="#5b9fd6" /></svg></StCell>
      <StCell on className="w-[15px] ml-[3px]"><svg width="12" height="12" viewBox="0 0 12 12" fill="#e8e8e8"><path d="M6 1l1 5 3 5H8L6 7l-3 4H1l3-5z" /><circle cx="10" cy="2" r="1.5" fill="none" stroke="#e8e8e8" /></svg></StCell>
      <StCell className="w-[16px]"><svg width="12" height="12" viewBox="0 0 12 12" fill="#ccc"><path d="M6 1l1 5 3 5H8L6 7l-3 4H1l3-5z" /></svg></StCell>
      <StCell className="w-[16px]"><svg width="12" height="12" viewBox="0 0 12 12" fill="#ccc"><path d="M6 0l1 7 4 4H8L6 8l-2 3H1l4-4z" /></svg></StCell>
      <StCell className="w-[14px] text-[7.5px]">1:1</StCell>
      <StCell className="w-[8px]"><Dn /></StCell>
      <StCell className="w-[18px]"><svg width="12" height="12" viewBox="0 0 12 12"><circle cx="6" cy="6" r="4" fill="none" stroke="#ddd" strokeWidth="2.2" /><circle cx="6" cy="6" r="5.5" fill="none" stroke="#ddd" strokeWidth="1" strokeDasharray="1.5 1.5" /></svg></StCell>
      <StCell className="w-[12px]"><Dn /></StCell>
      <StCell className="w-[14px]"><Plus size={12} strokeWidth={1.2} /></StCell>
      <StCell className="w-[22px]"><svg width="12" height="12" viewBox="0 0 12 12" fill="none" stroke="#ccc"><rect x="1" y="1" width="10" height="7" /><rect x="6" y="6" width="5" height="5" fill="#ccc" /></svg></StCell>
      <StCell className="w-[6px]"><Dn /></StCell>
      <StCell className="w-[20px]"><svg width="12" height="12" viewBox="0 0 12 12" fill="none" stroke="#aaa"><path d="M1 1h4v4H1zM7 5h4v4H7zM3 8l2 3H1z" /></svg></StCell>
      <StCell className="w-[12px]"><svg width="12" height="13" viewBox="0 0 12 13"><rect x="2" y="1" width="8" height="11" fill="#cfcfcf" /><rect x="3" y="3" width="5" height="4" fill="#3d7fbf" /><path d="M6 11l2 2 4-4" stroke="#57c057" fill="none" /></svg></StCell>
      <StCell className="w-[24px]"><svg width="12" height="11" viewBox="0 0 12 11" fill="none" stroke="#ccc"><rect x=".5" y=".5" width="11" height="10" /><path d="M3 8l6-5M9 6V3H6" /></svg></StCell>
      <StCell className="w-[12px]"><svg width="12" height="10" viewBox="0 0 12 10" stroke="#ddd" strokeWidth="1.2"><path d="M0 1h12M0 5h12M0 9h12" /></svg></StCell>
    </div>
  </div>
);

const Taskbar = () => (
  <div className="h-[27px] bg-[#0e0e0e] flex items-center font-['Open_Sans',sans-serif] relative">
    <svg width="12" height="12" viewBox="0 0 12 12" fill="#e8e8e8" className="ml-[10px]"><path d="M0 2l5-.8V5.7H0zM6 1l6-1v5.7H6zM0 6.3h5v4.5L0 10zM6 6.3h6V12l-6-1z" /></svg>
    <div className="w-[229px] h-[27px] ml-[10px] bg-[#f0f0f0] flex items-center text-[9.4px] text-[#333]">
      <div className="w-[13px] h-[13px] rounded-full border-[2px] border-[#222] ml-[6px] mr-[8px]" />
      Escribe aquí para buscar
      <Mic size={12} className="ml-auto mr-[8px]" />
    </div>
    <div className="w-[33px] flex justify-center ml-[1px]"><svg width="16" height="16" viewBox="0 0 16 16"><circle cx="8" cy="8" r="7.5" fill="#3a4c8c" /><rect x="5" y="7" width="6" height="5" fill="#ddd" /><path d="M6 7V5a2 2 0 0 1 4 0v2" stroke="#ddd" fill="none" /></svg></div>
    <div className="w-[33px] flex justify-center"><svg width="16" height="16" viewBox="0 0 16 16"><circle cx="8" cy="8" r="7.5" fill="#e8752a" /><circle cx="8.5" cy="8.5" r="3.8" fill="#2a3a8c" /><path d="M3 3c3 1 5-1 8 0s3 4 3 4c-2-2-5-3-6-1z" fill="#f4c12e" /></svg></div>
    <div className="w-[33px] flex justify-center"><svg width="16" height="16" viewBox="0 0 16 16"><circle cx="8" cy="8" r="7.5" fill="#e24a3b" /><path d="M1.5 4.5L5 11l3 4.5A7.5 7.5 0 0 1 1.5 4.5z" fill="#3aa757" /><path d="M8 4.5h6.7A7.5 7.5 0 0 1 8 15.5L11 10z" fill="#f7c52e" /><circle cx="8" cy="8" r="3.4" fill="#4285f4" stroke="#fff" /></svg></div>
    <div className="w-[33px] flex justify-center"><svg width="16" height="16" viewBox="0 0 16 16" fill="none" stroke="#bbb"><circle cx="8" cy="8" r="7" /><circle cx="8" cy="5" r="2.2" /><circle cx="5" cy="10" r="2.2" /><circle cx="11" cy="10" r="2.2" /></svg></div>
    <div className="w-[33px] h-[27px] bg-[#3a3a3a] flex items-center justify-center"><div className="w-[18px] h-[18px] bg-[#eee] text-[#c4262e] text-[15px] leading-[18px] font-bold text-center font-['Liberation_Sans',sans-serif]">A</div></div>
    <div className="w-[33px] flex justify-center"><svg width="16" height="16" viewBox="0 0 16 16"><path d="M1 3h6l1 2h7v9H1z" fill="#efc65a" /><rect x="5" y="8" width="6" height="6" fill="#6fb4e0" /></svg></div>
    <div className="w-[33px] flex justify-center"><div className="w-[16px] h-[18px] bg-[#1ba0d8] rounded-[3px] text-white text-[14px] leading-[18px] font-bold text-center">C</div></div>
    <div className="w-[33px] flex justify-center"><svg width="16" height="16" viewBox="0 0 16 16"><rect width="16" height="16" fill="#fff" /><rect x="1" y="1" width="14" height="14" fill="#111" /><path d="M1 15l4-7 3 3 3-6 4 7v3z" fill="#fff" /></svg></div>
    <div className="absolute left-0 top-[25px] w-full h-[2px] flex">
      <div className="w-[331px]" />
      <div className="w-[27px] bg-[#6f9cc0]" /><div className="w-[5px]" />
      <div className="w-[28px] bg-[#6f9cc0]" /><div className="w-[3px]" />
      <div className="w-[32px] bg-[#6f9cc0]" /><div className="w-[3px]" />
      <div className="w-[27px] bg-[#6f9cc0]" /><div className="w-[6px]" />
      <div className="w-[28px] bg-[#6f9cc0]" /><div className="w-[5px]" />
      <div className="w-[26px] bg-[#6f9cc0]" />
    </div>
    <div className="ml-auto flex items-center gap-[4.3px] text-[#ddd]">
      <svg width="12" height="12" viewBox="0 0 12 12" fill="none" stroke="#aaa"><circle cx="6" cy="6" r="5" /><circle cx="3" cy="10" r="2" fill="#d33" stroke="none" /></svg>
      <svg width="12" height="12" viewBox="0 0 12 12"><path d="M2 1h8l-1 10H3z" fill="#ddd" /><circle cx="6" cy="5" r="2" fill="#222" /></svg>
      <svg width="12" height="12" viewBox="0 0 12 12"><rect width="12" height="12" rx="2" fill="#2d7fd3" /><circle cx="6" cy="6" r="3" fill="none" stroke="#fff" /></svg>
      <svg width="12" height="12" viewBox="0 0 12 12" fill="none" stroke="#ccc"><rect x="3.5" y="4" width="5" height="8" /><path d="M5 1h2v3H5z" /></svg>
      <svg width="12" height="12" viewBox="0 0 12 12" fill="#eee"><path d="M3 10a3 3 0 0 1 0-6 3.5 3.5 0 0 1 6.5 1A2.5 2.5 0 0 1 9 10z" /></svg>
      <svg width="12" height="12" viewBox="0 0 12 12" fill="#ddd"><path d="M3 1l3 2-3 2-3-2zM9 1l3 2-3 2-3-2zM3 6l3 2 3-2 3 2-3 2-3-2-3 2-3-2z" /></svg>
      <svg width="12" height="12" viewBox="0 0 12 12"><path d="M1 1h10v6l-5 5-5-5z" fill="#ddd" /><rect x="7" y="7" width="5" height="5" fill={Y} /></svg>
      <svg width="12" height="12" viewBox="0 0 12 12"><path d="M2 3l5-2 4 4-3 6-5-1z" fill="#d8b040" /><circle cx="6" cy="6" r="2.5" fill="#5aa85a" /></svg>
      <svg width="12" height="12" viewBox="0 0 12 12" fill="none" stroke="#888"><path d="M1 11l10-10v10zM5 11V7M8 11V4" /></svg>
      <svg width="10" height="13" viewBox="0 0 10 13"><rect width="10" height="13" rx="4" fill="#1f6fd6" /><path d="M2.5 4l5 5L5 11V2l2.5 2-5 5" stroke="#fff" fill="none" strokeWidth=".8" /></svg>
      <svg width="12" height="10" viewBox="0 0 12 10"><rect width="12" height="10" fill="#4f8f2e" /><circle cx="6" cy="5" r="2" fill="#b5e08a" /></svg>
      <svg width="12" height="12" viewBox="0 0 12 12" fill="none" stroke="#ddd"><path d="M1 4h2l3-3v10L3 8H1zM8 4c1 1 1 3 0 4M10 2c2 2 2 6 0 8" /></svg>
      <div className="w-[40px] text-center text-[7.5px] leading-[11px] text-[#ddd] ml-[1px]"><div>16:32</div><div>14/11/2018</div></div>
      <svg width="13" height="13" viewBox="0 0 13 13" fill="none" stroke="#ddd" className="ml-[6px] mr-[15px]"><path d="M1 1h11v9H6l-2 2v-2H1z" /></svg>
    </div>
  </div>
);

export default function App() {
  return (
    <div className="w-[1280px] h-[720px] overflow-hidden flex flex-col bg-[#3a3a3a] font-['Roboto',sans-serif] [text-rendering:geometricPrecision]">
      <div className="relative">
        <div className="absolute left-0 top-0 w-[28px] h-[30px] bg-[#6a6a6a] flex items-center justify-center z-10">
          <span className="text-[#c8202c] text-[25px] leading-[30px] font-bold font-['Liberation_Sans',sans-serif]">A</span>
          <Dn className="absolute right-[2px] top-[13px]" />
        </div>
        <div className="pl-[28px] bg-white"><TitleBar /></div>
      </div>
      <RibbonTabs />
      <Ribbon />
      <FileTabs />
      <div className="h-[3px] bg-[#666]" />
      <div className="flex-1 flex relative min-h-0">
        <PropsPanel />
        <Canvas />
        <CmdLine />
      </div>
      <StatusBar />
      <Taskbar />
    </div>
  );
}
